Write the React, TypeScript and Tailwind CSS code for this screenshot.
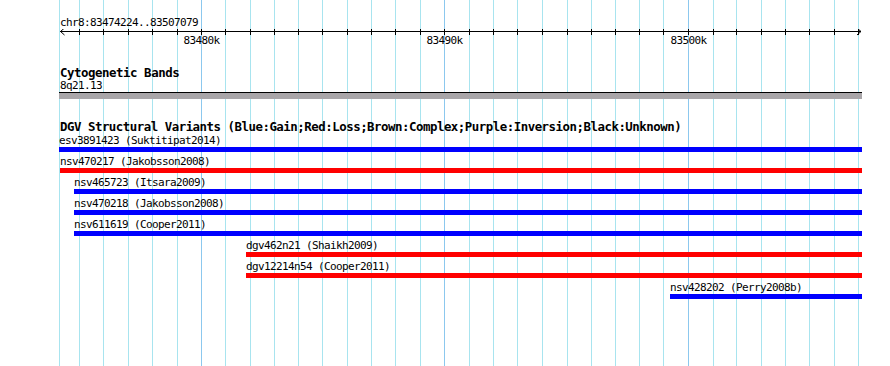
import React from "react";

// grid line x positions (1k steps) across the 83474224..83507079 window
const GRID = [
  79, 103, 128, 152, 177, 201, 225, 250, 274, 298, 322, 347, 371, 395, 420, 444, 469,
  493, 517, 542, 567, 591, 615, 639, 663, 688, 713, 736, 761, 785, 809, 834, 858,
];
const MAJOR = [
  { x: 201, label: "83480k" },
  { x: 444, label: "83490k" },
  { x: 688, label: "83500k" },
];

type Variant = { name: string; color: string; start: number };

const VARIANTS: Variant[] = [
  { name: "esv3891423 (Suktitipat2014)", color: "#0000ff", start: 0 },
  { name: "nsv470217 (Jakobsson2008)", color: "#ff0000", start: 1 },
  { name: "nsv465723 (Itsara2009)", color: "#0000ff", start: 15 },
  { name: "nsv470218 (Jakobsson2008)", color: "#0000ff", start: 15 },
  { name: "nsv611619 (Cooper2011)", color: "#0000ff", start: 15 },
  { name: "dgv462n21 (Shaikh2009)", color: "#ff0000", start: 187 },
  { name: "dgv12214n54 (Cooper2011)", color: "#ff0000", start: 187 },
  { name: "nsv428202 (Perry2008b)", color: "#0000ff", start: 611 },
];

const PANEL_W = 803;

const Grid = () => (
  <svg className="absolute inset-0" width={890} height={366} shapeRendering="crispEdges">
    <line x1={59.5} y1={0} x2={59.5} y2={366} stroke="#a8e4ef" />
    {GRID.map((x) => (
      <line
        key={x}
        x1={x + 0.5}
        y1={0}
        x2={x + 0.5}
        y2={366}
        stroke={MAJOR.some((m) => m.x === x) ? "#8cc8ee" : "#a8e4ef"}
      />
    ))}
  </svg>
);

const Ruler = () => (
  <svg className="block" width={890} height={18}>
    <g shapeRendering="crispEdges" stroke="#000">
      <line x1={60} y1={2.5} x2={861} y2={2.5} />
      {GRID.map((x) => (
        <line key={x} x1={x + 0.5} y1={0} x2={x + 0.5} y2={6} />
      ))}
    </g>
    <polyline points="64.5,-1 60.5,2.5 64.5,6" fill="none" stroke="#000" />
    <polyline points="857,-1 861,2.5 857,6" fill="none" stroke="#000" />
    {MAJOR.map((m) => (
      <text
        key={m.x}
        x={m.x + 0.5}
        y={15}
        textAnchor="middle"
        fontFamily="'DejaVu Sans Mono', monospace"
        fontSize={11}
        letterSpacing={-0.62}
        fill="#000"
      >
        {m.label}
      </text>
    ))}
  </svg>
);

const VariantRow = ({ v }: { v: Variant }) => (
  <div className="flex flex-col h-[21px]" style={{ marginLeft: v.start }}>
    <div className="h-[13px] text-[11px] tracking-[-0.62px] leading-[13px] whitespace-pre">{v.name}</div>
    <div className="h-[5px]" style={{ backgroundColor: v.color, width: PANEL_W - v.start }} />
  </div>
);

export default function App() {
  return (
    <div className="relative w-[890px] h-[366px] bg-white overflow-hidden text-black font-['DejaVu_Sans_Mono',monospace]">
      <Grid />
      <div className="relative flex flex-col">
        <div className="pt-[16px] pl-[60px] h-[29px] text-[11px] tracking-[-0.62px] leading-[13px] whitespace-pre">
          chr8:83474224..83507079
        </div>
        <Ruler />

        <div className="mt-[19px] pl-[59px] flex flex-col">
          <div className="pl-px h-[13px] text-[12.4px] tracking-[-0.45px] leading-[14px] font-bold whitespace-pre">
            Cytogenetic Bands
          </div>
          <div className="pl-px h-[13px] text-[11px] tracking-[-0.62px] leading-[13px]">8q21.13</div>
          <div className="w-[803px] h-[7px] border-t border-black bg-[#a9a6a9]" />
        </div>

        <div className="mt-[21px] pl-[59px] flex flex-col">
          <div className="pl-px h-[14px] text-[12.4px] tracking-[-0.48px] leading-[14px] font-bold whitespace-pre">
            DGV Structural Variants (Blue:Gain;Red:Loss;Brown:Complex;Purple:Inversion;Black:Unknown)
          </div>
          {VARIANTS.map((v) => (
            <VariantRow key={v.name} v={v} />
          ))}
        </div>
      </div>
    </div>
  );
}
